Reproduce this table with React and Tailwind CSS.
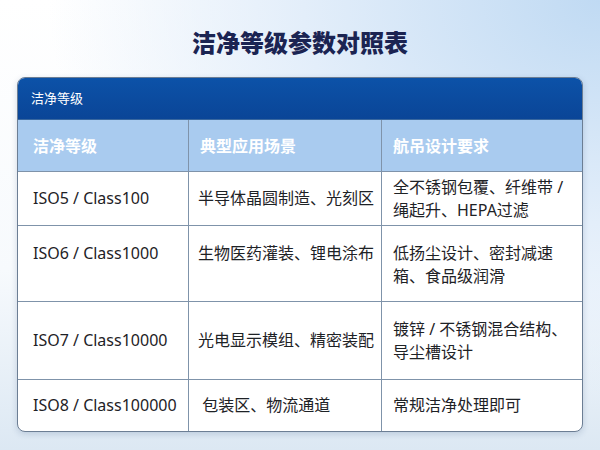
const rows = [
  {
    h: 'h-[53px] items-center',
    cells: ['ISO5 / Class100', '半导体晶圆制造、光刻区', '全不锈钢包覆、纤维带 /\n绳起升、HEPA过滤'],
  },
  {
    h: 'h-[75px] items-start pt-[16px]',
    cells: ['ISO6 / Class1000', '生物医药灌装、锂电涂布', '低扬尘设计、密封减速\n箱、食品级润滑'],
  },
  {
    h: 'h-[77px] items-center',
    cells: ['ISO7 / Class10000', '光电显示模组、精密装配', '镀锌 / 不锈钢混合结构、\n导尘槽设计'],
  },
  {
    h: 'h-[51px] items-center',
    cells: ['ISO8 / Class100000', ' 包装区、物流通道', '常规洁净处理即可'],
  },
];

const pads = ['pl-[15px]', 'pl-[9px]', 'pl-[11px]'];

export default function App() {
  return (
    <div
      className="relative w-[600px] h-[450px] overflow-hidden bg-[radial-gradient(ellipse_at_100%_0%,#c0daf3_0%,#e3eefa_35%,rgba(255,255,255,0)_65%),linear-gradient(180deg,#ffffff_0%,#f7fafd_60%,#dce8f3_100%)]"
      style={{ fontFamily: '"Noto Sans", "Noto Sans CJK SC", sans-serif' }}
    >
      {/* Title */}
      <div className="h-[77px] pt-[26px] text-center">
        <h1 className="text-[24px] leading-[34px] font-black text-[#1b2452]">洁净等级参数对照表</h1>
      </div>

      {/* Card */}
      <div className="ml-[17px] w-[566px] rounded-[8px] border border-[#6c7e94] bg-white overflow-hidden shadow-[0_2px_6px_rgba(30,60,110,0.18)]">
        <div className="h-[42px] flex items-center pl-[13px] bg-gradient-to-b from-[#0c52a8] to-[#0a4597] text-white text-[13px] border-b border-[#38679f]">
          洁净等级
        </div>

        {/* Header row */}
        <div className="grid grid-cols-[171px_193px_1fr] h-[52px] bg-[#a9cbef] border-b border-[#7f93aa] text-white font-bold text-[16px]">
          {['洁净等级', '典型应用场景', '航吊设计要求'].map((t, i) => (
            <div key={t} className={`flex items-center ${i === 0 ? 'pl-[15px]' : 'pl-[11px]'} ${i < 2 ? 'border-r border-[#7f93aa]' : ''}`}>
              {t}
            </div>
          ))}
        </div>

        {/* Body */}
        {rows.map((r, ri) => (
          <div
            key={ri}
            className={`grid grid-cols-[171px_193px_1fr] text-[#1e2226] text-[16px] leading-[23px] ${ri < rows.length - 1 ? 'border-b border-[#7f93aa]' : ''}`}
          >
            {r.cells.map((c, ci) => (
              <div
                key={ci}
                className={`flex ${r.h} ${pads[ci]} whitespace-pre ${ci < 2 ? 'border-r border-[#7f93aa]' : ''}`}
              >
                {c}
              </div>
            ))}
          </div>
        ))}
      </div>
    </div>
  );
}
